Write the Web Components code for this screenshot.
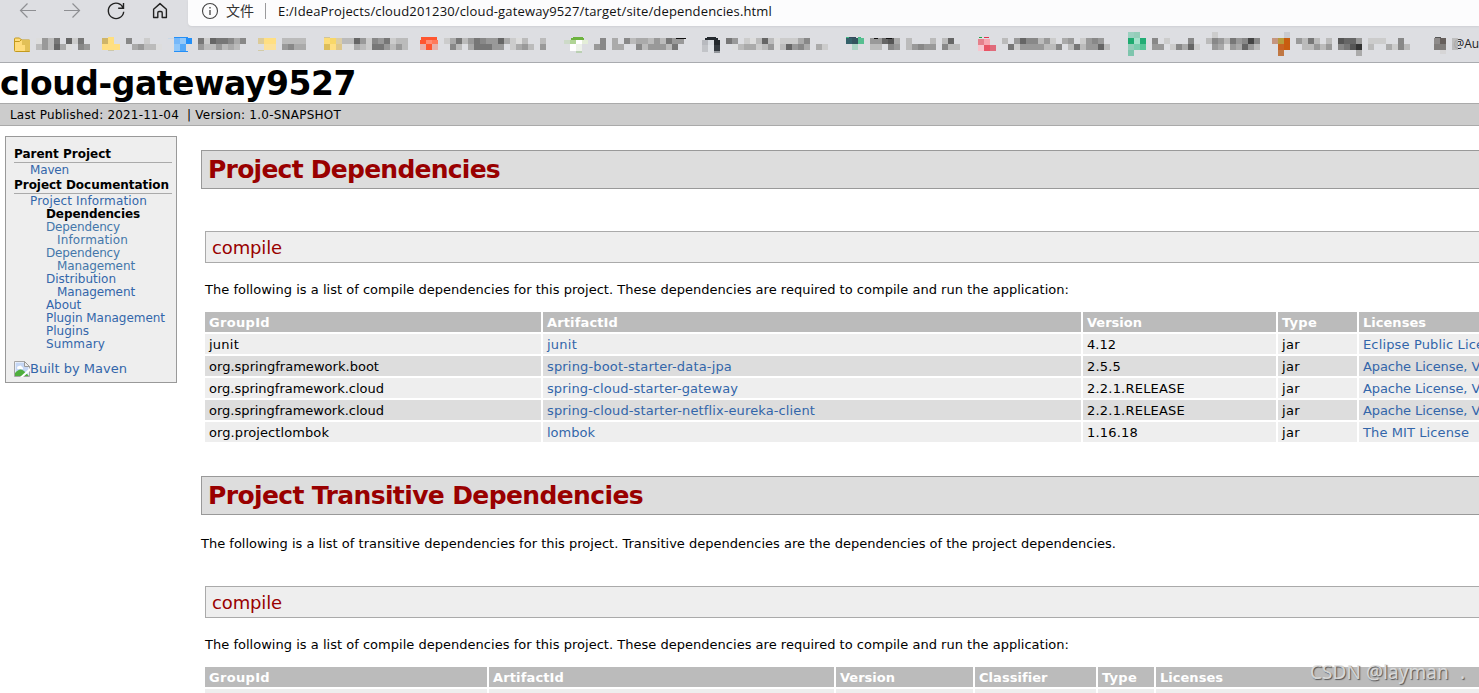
<!DOCTYPE html>
<html lang="zh-CN">
<head>
<meta charset="utf-8">
<title>cloud-gateway9527 – Project Dependencies</title>
<style>
  body {
    margin: 0;
    width: 1479px;
    height: 693px;
    overflow: hidden;
    position: relative;
    background: #fff;
    color: #000;
    font-family: Verdana, "DejaVu Sans", sans-serif;
    font-size: 13px;
  }

  main {
    display: flex;
    align-items: flex-start;
    padding: 10px 0 0 5px;
    gap: 24px;
    height: 557px;
    overflow: hidden;
  }
</style>
</head>
<body>
<browser-bar></browser-bar>
<site-banner>
  <text-run slot="title" width="356">cloud-gateway9527</text-run>
  <text-run slot="published" width="169">Last Published: 2021-11-04</text-run>
  <text-run slot="version" width="154">| Version: 1.0-SNAPSHOT</text-run>
</site-banner>
<main>
  <side-nav></side-nav>
  <report-content></report-content>
</main>
<water-mark><text-run width="139">CSDN @layman</text-run><span>.</span></water-mark>

<script>
// One line of text, letter-spaced to take up the given width
class TextRun extends HTMLElement {
  constructor () {
    super()
    this.shadow = this.attachShadow({ mode: 'open' })
    this.shadow.innerHTML = /* html */`
      <style>
        :host { display: inline-block; white-space: nowrap; }
      </style>
      <slot></slot>`
  }

  connectedCallback () {
    const width = Number(this.getAttribute('width'))
    const length = this.textContent.length

    if (!width || !length) return

    this.style.letterSpacing = '0px'
    const natural = this.getBoundingClientRect().width
    this.style.letterSpacing = `${((width - natural) / length).toFixed(4)}px`
  }
}

class BookmarkItem extends HTMLElement {
  constructor () {
    super()
    this.shadow = this.attachShadow({ mode: 'open' })
  }

  // rows are 6px squares: a hex digit is a grey level, a dot is empty
  render (item) {
    const cells = []

    item.rows.forEach((row, rowIndex) => {
      [...row].forEach((level, column) => {
        if (level === '.') return
        const x = item.text + column * 6
        const y = 6 + rowIndex * 6
        cells.push(`<rect x="${x}" y="${y}" width="6" height="6" fill="#${level.repeat(3)}"/>`)
      })
    })

    item.icon.forEach(([x, y, width, height, fill]) => {
      cells.push(`<rect x="${x}" y="${y}" width="${width}" height="${height}" fill="${fill}"/>`)
    })

    this.shadow.innerHTML = /* html */`
      <style>
        :host { display: block; flex: none; width: ${item.width}px; height: 36px; }
        svg { display: block; overflow: visible; }
      </style>
      <svg width="${item.width}" height="36" viewBox="${item.start} 0 ${item.width} 36" shape-rendering="crispEdges">
        ${cells.join('')}
        ${item.extra || ''}
      </svg>`
  }
}

class BrowserBar extends HTMLElement {
  constructor () {
    super()
    this.shadow = this.attachShadow({ mode: 'open' })
    this.bookmarks = []
  }

  connectedCallback () {
    this.loadData()
    this.render()
  }

  loadData () {
    this.bookmarks = [
      {
        start: 0, width: 96, text: 36,
        rows: ['', 'd9b7.6c7.', 'b9b6ad.89'],
        icon: [],
        extra: `<g shape-rendering="auto"><path d="M14.5 13 q0-1 1-1 h4l2 2 h8 v11.5 h-14 q-1 0-1-1z" fill="#ffdc7c" stroke="#c39a1c"/>
          <path d="M22 14h8v11h-5v-6h-3z" fill="#e2c057"/><path d="M15 15.5h4.5l2-2" fill="none" stroke="#c39a1c"/></g>`
      },
      {
        start: 96, width: 72, text: 126,
        rows: ['', '8..c..', '.a9bbd'],
        icon: [[102, 12, 6, 6, '#cfb568'], [108, 11, 6, 7, '#ffdf7e'], [102, 18, 18, 6, '#ffdf82'], [108, 24, 6, 1, '#cdc8aa']]
      },
      {
        start: 168, width: 84, text: 198,
        rows: ['', '7c6778a8', '9bb9bab.'],
        icon: [[174, 12, 6, 6, '#76b8f9'], [180, 12, 6, 6, '#94c9f9'], [174, 18, 6, 7, '#8fc7fa'], [180, 18, 6, 7, '#54a9f8'], [186, 12, 6, 6, '#238ff7'], [174, 11, 14, 1, '#238ff7'], [174, 25, 14, 1, '#238ff7'], [168, 12, 6, 1, '#cbd9e7']]
      },
      {
        start: 252, width: 66, text: 282,
        rows: ['', 'bbbb', '98aa'],
        icon: [[258, 12, 6, 6, '#dccb99'], [264, 12, 12, 6, '#ffdf82'], [264, 18, 12, 6, '#fce19a'], [258, 24, 6, 1, '#d2cba8']]
      },
      {
        start: 318, width: 96, text: 342,
        rows: ['', 'bb69c897cbb', 'ddabc779b9b'],
        icon: [[324, 11, 6, 1, '#cfc49c'], [324, 12, 6, 6, '#fddd78'], [330, 12, 6, 6, '#f8d768'], [336, 12, 6, 6, '#dbcda7'], [324, 18, 6, 6, '#ddbd59'], [330, 18, 6, 6, '#ffdf82'], [336, 18, 6, 6, '#dec78a']]
      },
      {
        start: 414, width: 144, text: 444,
        rows: ['', 'ca7b978996acdb..b', '.8b.a77799.ca9b.9'],
        icon: [[421, 11, 16, 3, '#ff5630'], [420, 14, 6, 4, '#ff5630'], [426, 14, 6, 4, '#ff8d75'], [432, 14, 6, 4, '#ff795b'], [420, 18, 6, 6, '#e8b0aa'], [426, 18, 6, 6, '#ff5630'], [432, 18, 6, 6, '#e8b0aa']]
      },
      {
        start: 558, width: 138, text: 594,
        rows: ['', '.8.a.8baab9b799', '98.aa..8b999b7.'],
        icon: [[573, 11, 10, 1, '#6db33f'], [571, 12, 13, 2, '#6db33f'], [564, 14, 6, 4, '#cddac8'], [570, 14, 6, 4, '#b0d495'], [576, 14, 6, 4, '#fff'], [582, 14, 6, 4, '#e4eed8'], [570, 18, 6, 7, '#fff'], [576, 18, 6, 7, '#edf2e9'], [576, 25, 6, 2, '#bad0b3'], [676, 12, 10, 1, '#111']]
      },
      {
        start: 696, width: 144, text: 726,
        rows: ['', '79.cdb6bdccca8...', '.dbaacb9db698a.ac'],
        icon: [[707, 11, 9, 1, '#24292e'], [705, 12, 13, 2, '#24292e'], [702, 14, 6, 5, '#b8babf'], [708, 14, 6, 5, '#d8dce1'], [714, 14, 6, 5, '#24292e'], [702, 19, 6, 7, '#c2c4c8'], [708, 19, 6, 7, '#dee1e5'], [714, 19, 6, 6, '#343a40'], [714, 25, 6, 2, '#92969b']]
      },
      {
        start: 840, width: 132, text: 870,
        rows: ['', '9965a.b...b.b6.', 'bb.89.b9899.8bb'],
        icon: [[846, 11, 3, 1, '#41b883'], [849, 11, 7, 1, '#35495e'], [858, 11, 3, 1, '#41b883'], [846, 12, 6, 6, '#34616a'], [852, 12, 6, 6, '#34555f'], [858, 12, 6, 6, '#57bf91'], [852, 18, 6, 6, '#acd5c5'], [874, 12, 4, 1, '#111'], [886, 12, 6, 1, '#111']]
      },
      {
        start: 972, width: 150, text: 1002,
        rows: ['', 'b.9688b9c.a9.c989.', '.7c9999bb8.b7b996b'],
        icon: [[979, 11, 3, 1, '#24a148'], [984, 11, 5, 1, '#e3324e'], [978, 13, 6, 6, '#e5808b'], [984, 13, 6, 6, '#f7a6b0'], [978, 19, 6, 6, '#f8c5ce'], [984, 19, 6, 6, '#e95465'], [990, 19, 6, 6, '#e06b7b']]
      },
      {
        start: 1122, width: 144, text: 1152,
        rows: ['..........c', '8.c...8..b89b79848', '99.c8a6c..9ad9a69b'],
        icon: [[1128, 6, 6, 6, '#9bd0c0'], [1134, 6, 6, 6, '#94cdb9'], [1128, 12, 6, 6, '#1dab70'], [1134, 12, 6, 6, '#a5e1cb'], [1140, 12, 6, 6, '#22ad75'], [1128, 18, 6, 6, '#92ccb8'], [1134, 18, 6, 6, '#7bccae'], [1140, 18, 6, 6, '#57c598'], [1128, 24, 6, 6, '#7ec5ad']]
      },
      {
        start: 1266, width: 156, text: 1296,
        rows: ['', '9b7b.b.5669.ccc..8.', '.bb9b9.8753.b..ac8b', '..........a'],
        icon: [[1284, 6, 6, 6, '#c9cbd0'], [1272, 12, 6, 6, '#c59680'], [1278, 12, 6, 6, '#b99c3d'], [1284, 12, 6, 6, '#c85d10'], [1278, 18, 6, 6, '#c96423'], [1284, 18, 6, 6, '#c85d10'], [1278, 24, 6, 6, '#c07844']]
      },
      {
        start: 1422, width: 57, text: 1452,
        rows: ['', 'c', 'b'],
        icon: [[1435, 11, 6, 1, '#555'], [1434, 12, 6, 6, '#8e8b8a'], [1440, 12, 6, 6, '#655e5b'], [1434, 18, 12, 6, '#807d7b'], [1440, 24, 6, 4, '#d6d5d6']],
        extra: '<text x="1453.5" y="22" font-family="Open Sans, sans-serif" font-size="12" fill="#222">@Au</text><path d="M1452 12h6v12h-6z" fill="#bbb" opacity=".85"/>'
      }
    ]
  }

  render () {
    this.shadow.innerHTML = /* html */`
      <style>
        :host {
          display: block;
          height: 62px;
          border-bottom: 1px solid #a9abaf;
          background: #dddee2;
          overflow: hidden;
        }

        .toolbar {
          display: flex;
          height: 26px;
        }

        .buttons {
          flex: none;
          width: 188px;
          height: 26px;
        }

        .address {
          display: flex;
          flex: 1;
          align-items: center;
          box-sizing: border-box;
          height: 26px;
          padding: 0 0 4px 13px;
          border-bottom-left-radius: 4px;
          background: #fcfcfd;
          box-shadow: 0 1px 2px #cfd0d4;
          font-family: "Open Sans", "Noto Sans CJK SC", sans-serif;
          font-size: 13px;
          line-height: 20px;
          color: #111;
        }

        .scheme {
          margin-left: 7px;
          width: 29px;
          font-family: "Noto Sans CJK SC", sans-serif;
          font-size: 14px;
          line-height: 18px;
          padding-bottom: 2px;
          color: #333;
        }

        .divider {
          width: 1px;
          height: 16px;
          margin: 0 12px 0 10px;
          background: #9a9a9c;
        }

        .bookmarks {
          display: flex;
          height: 36px;
        }
      </style>

      <div class="toolbar">
        <svg class="buttons" viewBox="0 0 188 26" fill="none" stroke-width="1.2">
          <path d="M36 10.5H20.5M27.5 3.5l-7 7 7 7M64 10.5H79.5M72.5 3.5l7 7-7 7" stroke="#8e8f93"/>
          <path d="M123.3 8.3a7.7 7.7 0 1 0 .4 3.4M123.5 3v5.3h-5.3" stroke="#222" stroke-width="1.4"/>
          <path d="M153.6 9.2L160 3.6l6.4 5.6v8.3h-4.2v-4.8q0-1.2-1.2-1.2h-2q-1.2 0-1.2 1.2v4.8h-4.2z" stroke="#222" stroke-width="1.4" stroke-linejoin="round"/>
        </svg>
        <div class="address">
          <svg width="18" height="18" viewBox="0 0 18 18" fill="none" stroke="#444">
            <circle cx="9" cy="9" r="7.5" stroke-width="1.1"/>
            <path d="M9 8v5M9 5v1.4" stroke-width="1.3"/>
          </svg>
          <span class="scheme">文件</span>
          <span class="divider"></span>
          <text-run width="494">E:/IdeaProjects/cloud201230/cloud-gateway9527/target/site/dependencies.html</text-run>
        </div>
      </div>
      <div class="bookmarks"></div>`

    const list = this.shadow.querySelector('.bookmarks')

    this.bookmarks.forEach(bookmark => {
      const item = document.createElement('bookmark-item')
      item.render(bookmark)
      list.appendChild(item)
    })
  }
}

class SiteBanner extends HTMLElement {
  constructor () {
    super()
    this.shadow = this.attachShadow({ mode: 'open' })
    this.shadow.innerHTML = /* html */`
      <style>
        :host { display: block; }

        h1 {
          margin: 0;
          height: 40px;
          font-size: 33px;
          line-height: 41px;
        }

        .breadcrumbs {
          display: flex;
          gap: 8px;
          height: 21px;
          padding-left: 10px;
          border-top: 1px solid #aaa;
          border-bottom: 1px solid #aaa;
          background: #ccc;
          font-size: 12px;
          line-height: 22px;
        }
      </style>
      <h1><slot name="title"></slot></h1>
      <div class="breadcrumbs">
        <slot name="published"></slot>
        <slot name="version"></slot>
      </div>`
  }
}

class SideNav extends HTMLElement {
  constructor () {
    super()
    this.shadow = this.attachShadow({ mode: 'open' })
  }

  connectedCallback () {
    this.render()
  }

  render () {
    this.shadow.innerHTML = /* html */`
      <style>
        :host {
          display: block;
          flex: none;
          box-sizing: border-box;
          width: 172px;
          height: 247px;
          padding: 11px 4px 0 8px;
          border: 1px solid #999;
          background: #eee;
          font-size: 12px;
          line-height: 13px;
          color: #36a;
        }

        h5 {
          height: 14px;
          margin: 0;
          border-bottom: 1px solid #aaa;
          font-size: 12px;
          line-height: 13px;
          color: #000;
        }

        ul {
          margin: 0;
          padding: 0 0 0 16px;
          list-style: none;
        }

        li { height: 13px; }
        .group { padding: 1px 0 2px 16px; }
        .last { padding-bottom: 0; }
        .wrapped { padding-left: 11px; }
        strong { color: #000; }
        .visited { color: #47a; }

        .powered {
          display: flex;
          align-items: center;
          margin-top: 9px;
          font-size: 13px;
          line-height: 18px;
        }
      </style>

      <h5><text-run width="97">Parent Project</text-run></h5>
      <ul class="group">
        <li><text-run width="39">Maven</text-run></li>
      </ul>
      <h5><text-run width="155">Project Documentation</text-run></h5>
      <ul class="group last">
        <li><text-run width="117">Project Information</text-run></li>
        <ul>
          <li><strong><text-run width="94">Dependencies</text-run></strong></li>
          <li class="visited"><text-run width="74">Dependency</text-run></li>
          <li class="visited wrapped"><text-run width="71">Information</text-run></li>
          <li class="visited"><text-run width="74">Dependency</text-run></li>
          <li class="visited wrapped"><text-run width="78">Management</text-run></li>
          <li><text-run width="70">Distribution</text-run></li>
          <li class="wrapped"><text-run width="78">Management</text-run></li>
          <li><text-run width="35">About</text-run></li>
          <li><text-run width="119">Plugin Management</text-run></li>
          <li><text-run width="43">Plugins</text-run></li>
          <li><text-run width="59">Summary</text-run></li>
        </ul>
      </ul>
      <div class="powered">
        <svg width="16" height="16" viewBox="0 0 16 16">
          <path d="M.5.5h10l5 5v10H.5z" fill="#fff" stroke="#a5a5a5"/>
          <path d="M1.5 1.5h9v4h4v9h-13z" fill="#c5d7f5"/>
          <path d="M3 7q0-2 2-2 2-1.5 3 1 1.5.5 1 2H3.5z" fill="#fff"/>
          <path d="M1 15v-3q5-6 9-2l5 5z" fill="#4fae3d"/>
          <path d="M10.5.5v5h5z" fill="#eee" stroke="#999"/>
          <path d="M16 7L6 16h3l7-6z" fill="#fff"/>
        </svg>
        <text-run width="97">Built by Maven</text-run>
      </div>`
  }
}

class SectionHeading extends HTMLElement {
  constructor () {
    super()
    this.shadow = this.attachShadow({ mode: 'open' })
    this.shadow.innerHTML = /* html */`
      <style>
        :host {
          display: block;
          box-sizing: border-box;
          height: 39px;
          padding-left: 6px;
          border: 1px solid #999;
          background: #ddd;
          color: #900;
          font-size: 25px;
          font-weight: bold;
          line-height: 38px;
        }

        :host([level="3"]) {
          height: 32px;
          margin-left: 4px;
          border-color: #aaa;
          background: #eee;
          font-size: 18px;
          font-weight: normal;
          line-height: 31px;
        }
      </style>
      <slot></slot>`
  }
}

class DependencyTable extends HTMLElement {
  constructor () {
    super()
    this.shadow = this.attachShadow({ mode: 'open' })
    this.columns = []
    this.rows = []
  }

  connectedCallback () {
    this.render()
  }

  // cells are [text, width] or [text, width, true] for a link
  cell ([text, width, link]) {
    return `<text-run width="${width}"${link ? ' class="link"' : ''}>${text}</text-run>`
  }

  render () {
    this.shadow.innerHTML = /* html */`
      <style>
        :host { display: block; margin-left: 4px; }

        table {
          border-collapse: separate;
          border-spacing: 2px;
          table-layout: fixed;
          width: ${this.columns.reduce((sum, column) => sum + column[2] + 2, 2)}px;
          margin: -2px;
        }

        th, td {
          height: 20px;
          padding: 0 0 0 4px;
          text-align: left;
          line-height: 22px;
          font-size: 13px;
          white-space: nowrap;
        }

        text-run { display: block; width: max-content; height: 20px; }
        th { background: #bbb; color: #fff; }
        .a { background: #ddd; }
        .b { background: #eee; }
        .link { color: #36a; }
      </style>

      <table>
        <colgroup>${this.columns.map(column => `<col style="width: ${column[2]}px">`).join('')}</colgroup>
        <tr>${this.columns.map(([text, width]) => `<th>${this.cell([text, width])}</th>`).join('')}</tr>
        ${this.rows.map((row, index) => /* html */`
          <tr class="${index % 2 ? 'a' : 'b'}">${row.map(item => `<td>${this.cell(item)}</td>`).join('')}</tr>
        `).join('')}
      </table>`
  }
}

class ReportContent extends HTMLElement {
  constructor () {
    super()
    this.shadow = this.attachShadow({ mode: 'open' })
  }

  connectedCallback () {
    this.render()
  }

  render () {
    this.shadow.innerHTML = /* html */`
      <style>
        :host {
          display: block;
          flex: none;
          width: 1300px;
          padding-top: 14px;
        }

        p { margin: 0; height: 20px; line-height: 20px; }
        .lead { margin-top: 19px; }
        .sub { margin-top: 42px; }
        .intro { margin: 17px 0 12px 4px; }
        .next { margin-top: 34px; }
        .after-lead { margin-top: 32px; }
      </style>

      <section-heading><text-run width="292">Project Dependencies</text-run></section-heading>
      <section-heading class="sub" level="3"><text-run width="70">compile</text-run></section-heading>
      <p class="intro"><text-run width="864">The following is a list of compile dependencies for this project. These dependencies are required to compile and run the application:</text-run></p>
      <div class="direct"></div>

      <section-heading class="next"><text-run width="435">Project Transitive Dependencies</text-run></section-heading>
      <p class="lead"><text-run width="915">The following is a list of transitive dependencies for this project. Transitive dependencies are the dependencies of the project dependencies.</text-run></p>
      <section-heading class="after-lead" level="3"><text-run width="70">compile</text-run></section-heading>
      <p class="intro"><text-run width="864">The following is a list of compile dependencies for this project. These dependencies are required to compile and run the application:</text-run></p>
      <div class="transitive"></div>`

    const direct = document.createElement('dependency-table')
    direct.columns = [['GroupId', 61, 336], ['ArtifactId', 71, 538], ['Version', 55, 193], ['Type', 35, 79], ['Licenses', 63, 200]]
    direct.rows = [
      [['junit', 30], ['junit', 30, true], ['4.12', 29], ['jar', 18], ['Eclipse Public License 1.0', 170, true]],
      [['org.springframework.boot', 170], ['spring-boot-starter-data-jpa', 185, true], ['2.5.5', 34], ['jar', 18], ['Apache License, Version 2.0', 180, true]],
      [['org.springframework.cloud', 175], ['spring-cloud-starter-gateway', 191, true], ['2.2.1.RELEASE', 98], ['jar', 18], ['Apache License, Version 2.0', 180, true]],
      [['org.springframework.cloud', 175], ['spring-cloud-starter-netflix-eureka-client', 268, true], ['2.2.1.RELEASE', 98], ['jar', 18], ['Apache License, Version 2.0', 180, true]],
      [['org.projectlombok', 120], ['lombok', 48, true], ['1.16.18', 51], ['jar', 18], ['The MIT License', 106, true]]
    ]
    this.shadow.querySelector('.direct').appendChild(direct)

    const transitive = document.createElement('dependency-table')
    transitive.columns = [['GroupId', 61, 282], ['ArtifactId', 71, 345], ['Version', 55, 137], ['Classifier', 68, 121], ['Type', 35, 56], ['Licenses', 63, 400]]
    transitive.rows = [[['', 0], ['', 0], ['', 0], ['', 0], ['', 0], ['', 0]]]
    this.shadow.querySelector('.transitive').appendChild(transitive)
  }
}

class WaterMark extends HTMLElement {
  constructor () {
    super()
    this.shadow = this.attachShadow({ mode: 'open' })
    this.shadow.innerHTML = /* html */`
      <style>
        :host {
          position: absolute;
          right: 14px;
          bottom: 8px;
          display: flex;
          gap: 11px;
          font: 19px/26px "Noto Sans", sans-serif;
          color: rgba(225, 225, 225, .9);
          text-shadow: 1px 1px 1px #555;
        }
      </style>
      <slot></slot>`
  }
}

customElements.define('site-banner', SiteBanner)
customElements.define('section-heading', SectionHeading)
customElements.define('water-mark', WaterMark)
customElements.define('bookmark-item', BookmarkItem)
customElements.define('browser-bar', BrowserBar)
customElements.define('side-nav', SideNav)
customElements.define('dependency-table', DependencyTable)
customElements.define('report-content', ReportContent)
// last, so that runs are measured in the fonts of their parents
customElements.define('text-run', TextRun)
</script>
</body>
</html>
